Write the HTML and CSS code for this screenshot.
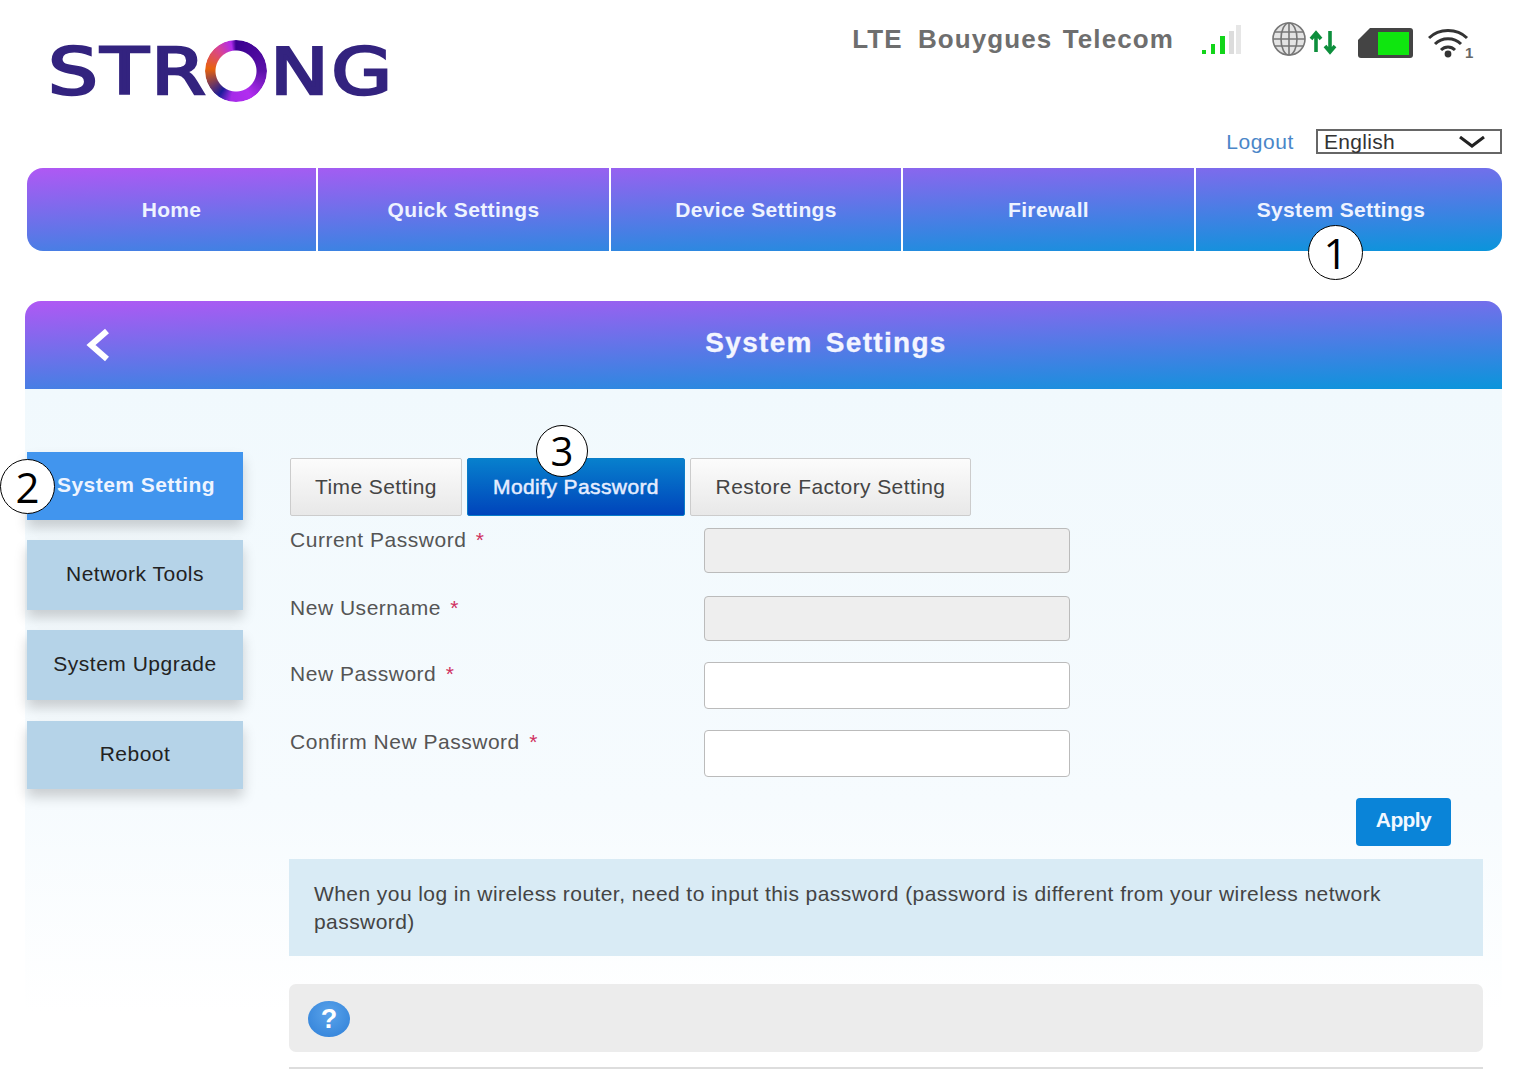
FILE: index.html
```html
<!DOCTYPE html>
<html lang="en">
  <head>
    <meta charset="UTF-8" />
    <title>STRONG - System Settings</title>
    <link rel="stylesheet" href="styles.css">
  </head>
  <body>
    <div class="page">
      <header class="top">
        <div class="logo">
          <span class="logo-text logo-str">STR</span>
          <span class="logo-ring"></span>
          <span class="logo-text">NG</span>
        </div>
        <div class="status">
          <span class="carrier"><span class="lte">LTE</span> Bouygues Telecom</span>
          <svg class="signal" width="40" height="32" viewBox="0 0 40 32">
            <rect x="0" y="26" width="4" height="4" fill="#12d51a" />
            <rect x="9" y="20" width="4" height="10" fill="#12d51a" />
            <rect x="18" y="12" width="5" height="18" fill="#12d51a" />
            <rect x="27" y="7" width="5" height="23" fill="#dcdcdc" />
            <rect x="34" y="1" width="5" height="29" fill="#e6e6e6" />
          </svg>
          <svg class="globe" width="66" height="34" viewBox="0 0 66 34">
            <g fill="none" stroke="#777" stroke-width="1.6">
              <circle cx="17" cy="15" r="16" fill="#e4e4e4" />
              <ellipse cx="17" cy="15" rx="8" ry="16" />
              <path d="M17 -1V31M2 8H32M1 15H33M2 22H32" />
            </g>
            <path d="M44 28V10M39 15l5-6 5 6M58 7V27M53 22l5 6 5-6" fill="none" stroke="#0d8f3c" stroke-width="3.6" />
          </svg>
          <svg class="sim" width="56" height="32" viewBox="0 0 56 32">
            <path d="M13 1H53a3 3 0 0 1 3 3V28a3 3 0 0 1-3 3H4a3 3 0 0 1-3-3V13z" fill="#444" />
            <rect x="21" y="5" width="31" height="23" fill="#0fe60f" />
          </svg>
          <svg class="wifi" width="46" height="36" viewBox="0 0 46 36">
            <g fill="none" stroke="#333" stroke-width="3">
              <path d="M1 11C11 1 29 1 39 11" />
              <path d="M7 17C14 10 26 10 33 17" />
              <path d="M13 23C17 19 23 19 27 23" />
            </g>
            <circle cx="20" cy="27" r="3.4" fill="#333" />
            <text x="37" y="31" class="wifi-num">1</text>
          </svg>
        </div>
        <div class="tools">
          <a class="logout" href="#">Logout</a>
          <div class="lang">
            <span>English</span>
            <svg width="26" height="12" viewBox="0 0 26 12">
              <path d="M1 1l12 9 12-9" fill="none" stroke="#222" stroke-width="3" />
            </svg>
          </div>
        </div>
      </header>

      <nav class="nav">
        <a href="#">Home</a>
        <a href="#">Quick Settings</a>
        <a href="#">Device Settings</a>
        <a href="#">Firewall</a>
        <a class="nav-last" href="#">System Settings</a>
        <span class="mark mark-1">1</span>
      </nav>

      <div class="title-bar">
        <svg class="back" width="26" height="34" viewBox="0 0 26 34">
          <path d="M22 3L6 17l16 14" fill="none" stroke="#fff" stroke-width="6" />
        </svg>
        <h1>System Settings</h1>
      </div>

      <main class="panel">
        <aside class="side">
          <a class="side-item active" href="#">System Setting</a>
          <a class="side-item" href="#">Network Tools</a>
          <a class="side-item" href="#">System Upgrade</a>
          <a class="side-item" href="#">Reboot</a>
          <span class="mark mark-2">2</span>
        </aside>

        <section class="content">
          <div class="tabs">
            <a class="tab tab-time" href="#">Time Setting</a>
            <a class="tab tab-pass active" href="#">Modify Password</a>
            <a class="tab tab-reset" href="#">Restore Factory Setting</a>
            <span class="mark mark-3">3</span>
          </div>

          <form class="form">
            <div class="row row-a">
              <label>Current Password <b>*</b></label>
              <input class="field off" type="text" disabled />
            </div>
            <div class="row row-b">
              <label>New Username <b>*</b></label>
              <input class="field off" type="text" disabled />
            </div>
            <div class="row row-c">
              <label>New Password <b>*</b></label>
              <input class="field" type="password" />
            </div>
            <div class="row row-d">
              <label>Confirm New Password <b>*</b></label>
              <input class="field" type="password" />
            </div>
            <div class="actions">
              <button class="apply" type="button">Apply</button>
            </div>
          </form>

          <div class="info">When you log in wireless router, need to input this password (password is different from your wireless network password)</div>

          <div class="help">
            <span class="help-icon">?</span>
          </div>
          <div class="foot-line"></div>
        </section>
      </main>
    </div>
  </body>
</html>
```

FILE: styles.css
```css
html,
body {
  margin: 0;
  height: 1080px;
  overflow: hidden;
  background: #fff;
}

body {
  font-family: "Liberation Sans", Arial, sans-serif;
  color: #333;
}

a {
  text-decoration: none;
  color: inherit;
}

.page {
  padding-left: 25px;
  width: 1477px;
}

/* header */
.top {
  display: grid;
  grid-template-columns: 1fr auto;
  height: 168px;
}

.logo {
  grid-row: 1 / 3;
  display: flex;
  align-items: center;
  height: 126px;
  padding: 18px 0 0 23px;
  box-sizing: border-box;
}

.logo-text {
  display: inline-block;
  font-family: "DejaVu Sans", sans-serif;
  font-size: 64px;
  line-height: 70px;
  letter-spacing: 2px;
  color: #33237f;
  -webkit-text-stroke: 2.5px #33237f;
  transform: scaleX(1.23);
  transform-origin: left center;
}

.logo-str {
  margin-right: 27px;
}

.logo-ring {
  flex: none;
  width: 62px;
  height: 62px;
  margin: -2px 3px 0 0;
  border-radius: 50%;
  background: conic-gradient(#3a008f 0deg, #5a10a8 90deg, #b22df0 150deg, #a52be8 190deg, #1c1c9a 215deg, #e8620c 275deg, #d9458f 320deg, #b12cee 350deg, #3a008f 360deg);
  -webkit-mask: radial-gradient(circle, transparent 20px, #000 21px);
  mask: radial-gradient(circle, transparent 20px, #000 21px);
}

.status {
  display: flex;
  align-items: flex-start;
  justify-self: end;
  height: 62px;
  padding: 22px 28px 0 0;
  box-sizing: border-box;
}

.carrier {
  font-size: 26px;
  font-weight: bold;
  line-height: 34px;
  color: #6e6e6e;
  letter-spacing: 1.1px;
  word-spacing: 2px;
  margin-right: 28px;
}

.lte {
  margin-right: 5px;
}

.signal {
  margin: 2px 30px 0 0;
}

.globe {
  margin: 2px 19px 0 0;
  overflow: visible;
}

.sim {
  margin: 5px 15px 0 0;
}

.wifi {
  margin-top: 5px;
}

.wifi-num {
  font-size: 15px;
  font-weight: bold;
  fill: #666;
}

.tools {
  grid-column: 2;
  display: flex;
  align-items: center;
  justify-content: flex-end;
  gap: 22px;
  padding-top: 25px;
}

.logout {
  font-size: 21px;
  letter-spacing: 0.6px;
  color: #4a86c8;
}

.lang {
  display: flex;
  align-items: center;
  justify-content: space-between;
  width: 186px;
  height: 25px;
  box-sizing: border-box;
  border: 2px solid #666;
  padding: 0 15px 0 6px;
  font-size: 21px;
  letter-spacing: 0.3px;
  color: #333;
}

/* nav */
.nav {
  position: relative;
  display: grid;
  grid-template-columns: 289px 293px 292px 293px 1fr;
  margin-left: 2px;
  height: 83px;
  border-radius: 16px;
  background: linear-gradient(178deg, #b058f4 0%, #0a95db 100%);
}

.nav a {
  display: flex;
  align-items: center;
  justify-content: center;
  font-size: 21px;
  font-weight: bold;
  letter-spacing: 0.35px;
  color: #eef3ff;
  border-left: 2px solid #fff;
}

.nav a:first-child {
  border-left: 0;
}

.nav a.nav-last {
  padding-right: 16px;
}

.title-bar {
  display: flex;
  align-items: center;
  justify-content: center;
  position: relative;
  margin-top: 50px;
  height: 88px;
  border-radius: 16px 16px 0 0;
  background: linear-gradient(178deg, #b058f4 0%, #0a95db 100%);
}

.title-bar h1 {
  margin: -4px 0 0 125px;
  font-size: 28px;
  letter-spacing: 1.3px;
  word-spacing: 4px;
  color: #f3f5ff;
  -webkit-text-stroke: 0.3px #f3f5ff;
}

.back {
  position: absolute;
  left: 60px;
  top: 27px;
}

/* main area */
.panel {
  display: flex;
  height: 692px;
  background: linear-gradient(to bottom, #f1f9fd 0%, #f6fbfe 60%, #fff 90%);
}

.side {
  position: relative;
  display: flex;
  flex-direction: column;
  gap: 20px;
  width: 216px;
  margin: 63px 0 0 2px;
}

.side-item {
  display: flex;
  align-items: center;
  justify-content: center;
  height: 70px;
  font-size: 21px;
  letter-spacing: 0.5px;
  color: #222;
  background: #b5d3e8;
  box-shadow: 0 8px 12px rgba(0, 0, 0, 0.18);
  padding-bottom: 2px;
  box-sizing: border-box;
}

.side-item:last-of-type {
  height: 68px;
  margin-top: 1px;
}

.side-item.active {
  height: 68px;
  font-weight: bold;
  letter-spacing: 0.45px;
  color: #eef4ff;
  background: #4195ee;
  padding: 0 0 2px 2px;
}

.content {
  width: 1194px;
  margin-left: 46px;
  padding-top: 69px;
}

.tabs {
  position: relative;
  display: flex;
  gap: 5px;
}

.tab {
  display: flex;
  align-items: center;
  justify-content: center;
  height: 58px;
  box-sizing: border-box;
  font-size: 21px;
  letter-spacing: 0.4px;
  color: #444;
  border: 1px solid #ccc;
  border-radius: 2px;
  background: linear-gradient(to bottom, #fcfcfc, #e8e8e8);
  padding-bottom: 1px;
}

.tab-time {
  width: 172px;
  margin-left: 1px;
}

.tab-pass {
  width: 218px;
}

.tab-reset {
  width: 281px;
}

.tab.active {
  color: #e6edff;
  -webkit-text-stroke: 0.5px #e6edff;
  border-color: #0a7dc8;
  background: linear-gradient(to bottom, #0780cd, #0044bb);
}

/* form */
.form {
  display: flex;
  flex-direction: column;
}

.row {
  display: flex;
}

.row label {
  width: 414px;
  margin-left: 1px;
  font-size: 21px;
  line-height: 24px;
  letter-spacing: 0.52px;
  color: #555;
}

.row b {
  color: #d03060;
  margin-left: 3px;
  font-weight: normal;
}

.row-a {
  margin-top: 12px;
}

.row-b {
  margin-top: 23px;
}

.row-c {
  margin-top: 21px;
}

.row-d {
  margin-top: 21px;
}

.field {
  width: 366px;
  height: 47px;
  box-sizing: border-box;
  border: 1px solid #bbb;
  border-radius: 4px;
  background: #fff;
  padding: 0 8px;
}

.field.off {
  height: 45px;
  background: #eee;
}

.actions {
  display: flex;
  justify-content: flex-end;
  margin-top: 21px;
  padding-right: 32px;
}

.apply {
  width: 95px;
  height: 48px;
  border: 0;
  border-radius: 4px;
  background: #0a84d8;
  color: #f2f8ff;
  font-family: inherit;
  font-size: 21px;
  font-weight: bold;
  letter-spacing: -0.6px;
  padding-bottom: 6px;
}

.info {
  margin-top: 13px;
  height: 97px;
  box-sizing: border-box;
  padding: 21px 90px 0 25px;
  background: #d9ebf5;
  font-size: 21px;
  line-height: 28px;
  letter-spacing: 0.43px;
  color: #444;
}

.help {
  display: flex;
  align-items: center;
  margin-top: 28px;
  height: 68px;
  padding-left: 19px;
  border-radius: 7px;
  background: #ececec;
}

.help-icon {
  display: flex;
  align-items: center;
  justify-content: center;
  width: 42px;
  height: 36px;
  margin-top: 2px;
  border-radius: 50%;
  background: radial-gradient(circle at 50% 35%, #5aa3ea, #2e7fd8);
  color: #fff;
  font-size: 27px;
  font-weight: bold;
}

.foot-line {
  margin-top: 15px;
  height: 2px;
  background: #ddd;
}

/* numbered callouts laid over the screenshot */
.mark {
  position: absolute;
  display: flex;
  align-items: center;
  justify-content: center;
  width: 53px;
  height: 53px;
  border: 1px solid #000;
  border-radius: 50%;
  background: #fff;
  color: #000;
  font-family: "Open Sans", sans-serif;
  font-size: 42px;
  line-height: 1;
}

.mark-1 {
  left: 1281px;
  top: 57px;
}

.mark-2 {
  left: -27px;
  top: 7px;
}

.mark-3 {
  left: 247px;
  top: -33px;
  width: 50px;
  height: 50px;
  font-size: 40px;
}
```
